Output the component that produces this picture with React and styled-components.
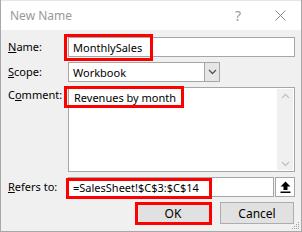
import React from 'react';
import styled, { createGlobalStyle } from 'styled-components';

const Global = createGlobalStyle`
  html, body { margin: 0; padding: 0; background: #ffffff; }
  body { font-family: "Noto Sans", "Open Sans", "Liberation Sans", sans-serif; font-size: 11px; }
`;

const Dialog = styled.div`
  width: 302px;
  height: 232px;
  box-sizing: border-box;
  border: 1px solid #a8a8a8;
  border-top: none;
  background: #f0f0f0;
  display: flex;
  flex-direction: column;
  position: relative;
  overflow: hidden;
`;

const TitleBar = styled.div`
  height: 30px;
  background: #ffffff;
  display: flex;
  align-items: center;
  padding-left: 9px;
  color: #999999;
  font-size: 12px;
  border-top: 1px solid #e6e6e6;
  box-sizing: border-box;
`;

const Title = styled.div`
  flex: 1;
`;

const TitleButton = styled.div`
  width: 42px;
  display: flex;
  justify-content: center;
  align-items: center;
  color: #9a9a9a;
  font-size: 14px;
`;

const Body = styled.div`
  flex: 1;
  display: grid;
  grid-template-columns: 60px 1fr;
  grid-template-rows: 20px 20px 85px 20px 22px;
  row-gap: 5px;
  padding: 7px 6px 0 7px;
  align-items: center;
`;

const Label = styled.div`
  color: #000;
  align-self: ${(p) => (p.top ? 'start' : 'center')};
  margin-top: ${(p) => (p.top ? '0px' : '-2px')};
  white-space: nowrap;
  u { text-decoration: underline; text-underline-offset: 1px; }
`;

const Field = styled.div`
  position: relative;
  height: 100%;
  width: ${(p) => p.width || 'auto'};
  flex: ${(p) => (p.grow ? 1 : 'none')};
  box-sizing: border-box;
  border: 1px solid #a6a6a6;
  background: #fff;
  display: flex;
  align-items: ${(p) => (p.multi ? 'stretch' : 'center')};
`;

const FieldText = styled.div`
  flex: 1;
  padding: ${(p) => (p.multi ? '2px 0 0 5px' : '0 0 0 4px')};
  color: #000;
  white-space: nowrap;
`;

const DropButton = styled.div`
  width: 15px;
  height: 100%;
  box-sizing: border-box;
  border-left: 1px solid #a6a6a6;
  background: #e6e6e6;
  display: flex;
  align-items: center;
  justify-content: center;
`;

const Scrollbar = styled.div`
  width: 16px;
  background: #f0f0f0;
  display: flex;
  flex-direction: column;
  justify-content: space-between;
  align-items: center;
  padding: 4px 0 3px;
  margin: 1px;
`;

const RefRow = styled.div`
  display: flex;
  height: 100%;
  gap: 1px;
`;

const RefButton = styled.div`
  width: 20px;
  height: 100%;
  box-sizing: border-box;
  border: 1px solid #a6a6a6;
  background: #fff;
  display: flex;
  align-items: center;
  justify-content: center;
`;

const Buttons = styled.div`
  grid-column: 1 / 3;
  display: flex;
  justify-content: flex-end;
  gap: 10px;
  height: 100%;
  padding-right: 1px;
`;

const Button = styled.div`
  position: relative;
  width: 74px;
  height: 100%;
  box-sizing: border-box;
  border: 1px solid #adadad;
  background: #e1e1e1;
  display: flex;
  align-items: center;
  justify-content: center;
  color: #000;
  font-size: 12px;
`;

const Highlight = styled.div`
  position: absolute;
  left: ${(p) => p.l}px;
  top: ${(p) => p.t}px;
  width: ${(p) => p.w}px;
  height: ${(p) => p.h}px;
  border: 3px solid #ff0000;
  box-sizing: border-box;
  pointer-events: none;
`;

const Grip = styled.svg`
  position: absolute;
  right: 1px;
  bottom: 1px;
`;

const Chevron = ({ up, color }) => (
  <svg width="9" height="6" viewBox="0 0 9 6">
    <path d={up ? 'M1 5 L4.5 1.5 L8 5' : 'M1 1 L4.5 4.5 L8 1'} fill="none" stroke={color} strokeWidth="1.3" />
  </svg>
);

const gripDots = [
  [8, 2], [6, 4], [8, 4], [4, 6], [6, 6], [8, 6], [2, 8], [4, 8], [6, 8], [8, 8],
];

const App = () => {
  return (
    <>
      <Global />
      <Dialog>
        <TitleBar>
          <Title>New Name</Title>
          <TitleButton>?</TitleButton>
          <TitleButton>
            <svg width="11" height="11" viewBox="0 0 11 11">
              <path d="M0.5 0.5 L10.5 10.5 M10.5 0.5 L0.5 10.5" stroke="#8a8a8a" strokeWidth="1" />
            </svg>
          </TitleButton>
        </TitleBar>
        <Body>
          <Label><u>N</u>ame:</Label>
          <Field>
            <FieldText>MonthlySales</FieldText>
            <Highlight l={-5} t={-4} w={89} h={27} />
          </Field>

          <Label><u>S</u>cope:</Label>
          <Field width="152px">
            <FieldText>Workbook</FieldText>
            <DropButton>
              <Chevron color="#555" />
            </DropButton>
          </Field>

          <Label top>C<u>o</u>mment:</Label>
          <Field multi>
            <FieldText multi>Revenues by month</FieldText>
            <Scrollbar>
              <Chevron up color="#c2c2c2" />
              <Chevron color="#c2c2c2" />
            </Scrollbar>
            <Highlight l={-5} t={-2} w={120} h={22} />
          </Field>

          <Label><u>R</u>efers to:</Label>
          <RefRow>
            <Field grow>
              <FieldText>=SalesSheet!$C$3:$C$14</FieldText>
              <Highlight l={-3} t={0} w={146} h={21} />
            </Field>
            <RefButton>
              <svg width="11" height="12" viewBox="0 0 11 12">
                <path d="M5.5 0.5 L10.5 5.5 L7.5 5.5 L7.5 9 L3.5 9 L3.5 5.5 L0.5 5.5 Z" fill="#000" />
                <rect x="0.5" y="10.5" width="10" height="1.5" fill="#000" />
              </svg>
            </RefButton>
          </RefRow>

          <Buttons>
            <Button>
              OK
              <Highlight l={-2} t={-1} w={77} h={23} />
            </Button>
            <Button>Cancel</Button>
          </Buttons>
        </Body>
        <Grip width="10" height="10" viewBox="0 0 10 10">
          {gripDots.map(([x, y]) => (
            <rect key={`${x}-${y}`} x={x} y={y} width="1" height="1" fill="#a0a0a0" />
          ))}
        </Grip>
      </Dialog>
    </>
  );
};

export default App;
